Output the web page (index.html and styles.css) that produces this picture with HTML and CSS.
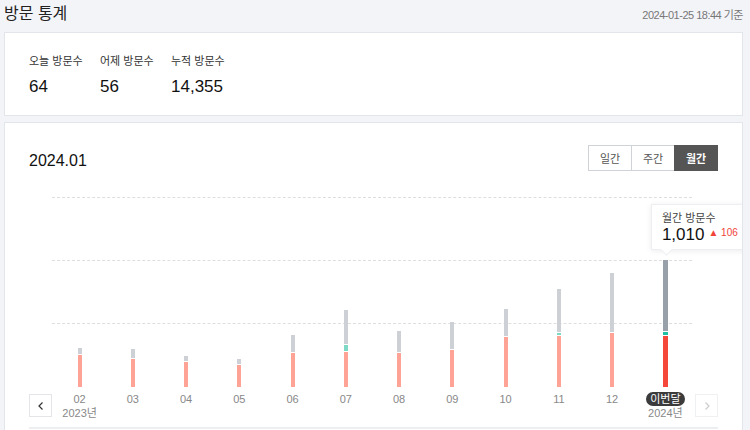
FILE: index.html
```html
<!DOCTYPE html>
<html lang="ko">
    <head>
        <meta charset="UTF-8" />
        <meta name="viewport" content="width=device-width, initial-scale=1.0" />
        <title>방문 통계</title>
        <link rel="stylesheet" href="styles.css">
    </head>
    <body>
        <div class="page">
            <div class="page-head">
                <h1>방문 통계</h1>
                <span class="updated">2024-01-25 18:44 기준</span>
            </div>

            <div class="card summary">
                <div class="stat">
                    <span class="stat-label">오늘 방문수</span>
                    <strong class="stat-value">64</strong>
                </div>
                <div class="stat">
                    <span class="stat-label">어제 방문수</span>
                    <strong class="stat-value">56</strong>
                </div>
                <div class="stat">
                    <span class="stat-label">누적 방문수</span>
                    <strong class="stat-value">14,355</strong>
                </div>
            </div>

            <div class="card graph">
                <div class="graph-head">
                    <h2>2024.01</h2>
                    <div class="tabs">
                        <button class="tab">일간</button>
                        <button class="tab">주간</button>
                        <button class="tab active">월간</button>
                    </div>
                </div>

                <div class="chart">
                    <button class="nav-btn prev">
                        <svg width="10" height="10" viewBox="0 0 10 10"><polyline points="6.5,1.5 3,5 6.5,8.5" fill="none" stroke="#333" stroke-width="1.2"/></svg>
                    </button>

                    <div class="chart-body">
                        <div class="grid"><div></div><div></div><div></div></div>

                        <div class="cols">
                            <div class="col">
                                <div class="bar-area"><div class="bar">
                                    <i class="seg gray" style="height: 6px"></i>
                                    <i class="seg red" style="height: 32px"></i>
                                </div></div>
                                <div class="label">02</div>
                                <div class="year">2023년</div>
                            </div>
                            <div class="col">
                                <div class="bar-area"><div class="bar">
                                    <i class="seg gray" style="height: 9px"></i>
                                    <i class="seg red" style="height: 28px"></i>
                                </div></div>
                                <div class="label">03</div>
                            </div>
                            <div class="col">
                                <div class="bar-area"><div class="bar">
                                    <i class="seg gray" style="height: 5px"></i>
                                    <i class="seg red" style="height: 25px"></i>
                                </div></div>
                                <div class="label">04</div>
                            </div>
                            <div class="col">
                                <div class="bar-area"><div class="bar">
                                    <i class="seg gray" style="height: 5px"></i>
                                    <i class="seg red" style="height: 22px"></i>
                                </div></div>
                                <div class="label">05</div>
                            </div>
                            <div class="col">
                                <div class="bar-area"><div class="bar">
                                    <i class="seg gray" style="height: 17px"></i>
                                    <i class="seg red" style="height: 34px"></i>
                                </div></div>
                                <div class="label">06</div>
                            </div>
                            <div class="col">
                                <div class="bar-area"><div class="bar">
                                    <i class="seg gray" style="height: 34px"></i>
                                    <i class="seg teal" style="height: 6px"></i>
                                    <i class="seg red" style="height: 35px"></i>
                                </div></div>
                                <div class="label">07</div>
                            </div>
                            <div class="col">
                                <div class="bar-area"><div class="bar">
                                    <i class="seg gray" style="height: 21px"></i>
                                    <i class="seg red" style="height: 34px"></i>
                                </div></div>
                                <div class="label">08</div>
                            </div>
                            <div class="col">
                                <div class="bar-area"><div class="bar">
                                    <i class="seg gray" style="height: 27px"></i>
                                    <i class="seg red" style="height: 37px"></i>
                                </div></div>
                                <div class="label">09</div>
                            </div>
                            <div class="col">
                                <div class="bar-area"><div class="bar">
                                    <i class="seg gray" style="height: 27px"></i>
                                    <i class="seg red" style="height: 50px"></i>
                                </div></div>
                                <div class="label">10</div>
                            </div>
                            <div class="col">
                                <div class="bar-area"><div class="bar">
                                    <i class="seg gray" style="height: 43px"></i>
                                    <i class="seg teal" style="height: 2px"></i>
                                    <i class="seg red" style="height: 51px"></i>
                                </div></div>
                                <div class="label">11</div>
                            </div>
                            <div class="col">
                                <div class="bar-area"><div class="bar">
                                    <i class="seg gray" style="height: 59px"></i>
                                    <i class="seg red" style="height: 54px"></i>
                                </div></div>
                                <div class="label">12</div>
                            </div>
                            <div class="col current">
                                <div class="bar-area">
                                    <div class="tooltip">
                                        <span class="tip-title">월간 방문수</span>
                                        <div class="tip-row">
                                            <strong>1,010</strong>
                                            <span class="tip-diff">▲ 106</span>
                                        </div>
                                    </div>
                                    <div class="bar">
                                        <i class="seg gray" style="height: 71px"></i>
                                        <i class="seg teal" style="height: 3px"></i>
                                        <i class="seg red" style="height: 51px"></i>
                                    </div>
                                </div>
                                <div class="label"><span class="pill">이번달</span></div>
                                <div class="year">2024년</div>
                            </div>
                        </div>
                    </div>

                    <button class="nav-btn next" disabled>
                        <svg width="10" height="10" viewBox="0 0 10 10"><polyline points="3.5,1.5 7,5 3.5,8.5" fill="none" stroke="#ccc" stroke-width="1.2"/></svg>
                    </button>
                </div>

                <div class="graph-foot"></div>
            </div>
        </div>
    </body>
</html>
```

FILE: styles.css
```css
body {
    margin: 0;
    background-color: #f3f4f7;
    font-family: 'Liberation Sans', 'Noto Sans CJK KR', sans-serif;
    color: #111;
}
.page {
    padding: 0 7px 0 4px;
}
.page-head {
    display: flex;
    justify-content: space-between;
    align-items: baseline;
    height: 32px;
}
h1 {
    margin: 0;
    font-size: 16px;
    font-weight: normal;
    line-height: 28px;
    color: #222;
}
.updated {
    font-size: 11px;
    letter-spacing: -0.5px;
    color: #777;
}
.card {
    background-color: white;
    border: 1px solid #e2e5ea;
}
.summary {
    display: flex;
    padding: 20px 24px 16px;
    height: 46px;
}
.stat {
    display: flex;
    flex-direction: column;
    width: 71px;
    white-space: nowrap;
}
.stat-label {
    font-size: 11px;
    line-height: 16px;
    color: #333;
}
.stat-value {
    margin-top: 7px;
    font-size: 17px;
    font-weight: normal;
    line-height: 22px;
    color: #111;
}

.graph {
    margin-top: 6px;
    padding: 22px 24px 0;
    overflow: hidden;
}
.graph-head {
    display: flex;
    justify-content: space-between;
    align-items: flex-end;
}
h2 {
    margin: 0;
    font-size: 16px;
    font-weight: normal;
    line-height: 20px;
    color: #111;
}
.tabs {
    display: flex;
}
.tab {
    width: 44px;
    height: 26px;
    padding: 0;
    border: 1px solid #cfd2d6;
    margin-left: -1px;
    background-color: white;
    font-family: inherit;
    font-size: 11px;
    color: #555;
}
.tab.active {
    background-color: #555;
    border-color: #555;
    color: white;
    font-weight: bold;
}

.chart {
    display: flex;
    align-items: flex-end;
    margin-top: 26px;
}
.nav-btn {
    width: 23px;
    height: 23px;
    padding: 0;
    margin-bottom: 3px;
    border: 1px solid #e3e5e9;
    background-color: white;
    display: flex;
    align-items: center;
    justify-content: center;
}
.nav-btn.next {
    border-color: #eef0f2;
}
.chart-body {
    flex: 1;
    position: relative;
    margin: 0 3px 0 1px;
}
.grid {
    position: absolute;
    top: 0;
    left: -1px;
    right: 0;
}
.grid div {
    height: 62px;
    border-top: 1px dashed #dedede;
}
.cols {
    display: flex;
    position: relative;
}
.col {
    flex: 1;
    display: flex;
    flex-direction: column;
    align-items: center;
}
.bar-area {
    height: 190px;
    display: flex;
    align-items: flex-end;
    position: relative;
}
.bar {
    width: 4px;
    display: flex;
    flex-direction: column;
    gap: 1px;
}
.seg {
    display: block;
}
.seg.gray { background-color: #cdd0d4; }
.seg.teal { background-color: #7ed8c6; }
.seg.red { background-color: #ffa396; }
.current .bar { width: 5px; }
.current .seg.gray { background-color: #98a1a9; }
.current .seg.teal { background-color: #1fbfa3; }
.current .seg.red { background-color: #f5483a; }

.label {
    margin-top: 5px;
    font-size: 11px;
    line-height: 14px;
    color: #888;
}
.year {
    font-size: 11px;
    line-height: 14px;
    color: #888;
}
.pill {
    display: inline-block;
    padding: 0 4px;
    border-radius: 7px;
    background-color: #3b3b3b;
    color: white;
    line-height: 14px;
}

.tooltip {
    position: absolute;
    top: 7px;
    left: -12px;
    width: 100px;
    height: 46px;
    box-sizing: border-box;
    padding: 6px 10px;
    background-color: white;
    border: 1px solid #eceef1;
    box-shadow: 0 1px 6px rgba(0, 0, 0, 0.08);
}
.tooltip::after {
    content: '';
    position: absolute;
    left: 10px;
    bottom: -5px;
    width: 8px;
    height: 8px;
    background-color: white;
    border-right: 1px solid #eceef1;
    border-bottom: 1px solid #eceef1;
    transform: rotate(45deg);
}
.tip-title {
    display: block;
    font-size: 11px;
    line-height: 14px;
    color: #444;
}
.tip-row {
    display: flex;
    align-items: flex-start;
    gap: 4px;
}
.tip-row strong {
    font-size: 17px;
    font-weight: normal;
    line-height: 20px;
    color: #111;
}
.tip-diff {
    font-size: 10px;
    line-height: 14px;
    color: #f04438;
    margin-top: 1px;
}
.graph-foot {
    margin-top: 7px;
    height: 10px;
    border-top: 2px solid #eceef0;
}
```
